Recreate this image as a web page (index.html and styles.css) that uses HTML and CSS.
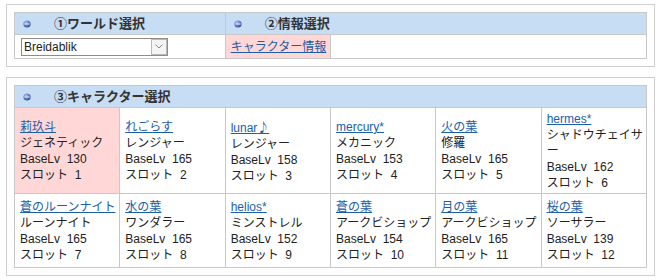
FILE: index.html
```html
<!DOCTYPE html>
<html lang="ja">
<head>
    <meta charset="UTF-8">
    <meta name="viewport" content="width=device-width, initial-scale=1.0">
    <title>キャラクター選択</title>
    <link rel="stylesheet" href="styles.css">
</head>
<body>
    <div class="box">
        <table class="grid">
            <colgroup><col><col><col><col><col><col></colgroup>
            <tr>
                <th colspan="2"><svg class="mark" width="8" height="8" viewBox="0 0 8 8"><defs><radialGradient id="dot" cx="35%" cy="30%" r="75%"><stop offset="0" stop-color="#a9bdee"/><stop offset="1" stop-color="#2b4a9f"/></radialGradient></defs><circle cx="4" cy="4" r="3.6" fill="url(#dot)"/><rect x="1.4" y="3.5" width="5.2" height="1" fill="#e4ebfb"/></svg>①ワールド選択</th>
                <th colspan="4"><svg class="mark" width="8" height="8" viewBox="0 0 8 8"><circle cx="4" cy="4" r="3.6" fill="url(#dot)"/><rect x="1.4" y="3.5" width="5.2" height="1" fill="#e4ebfb"/></svg>②情報選択</th>
            </tr>
            <tr class="tools">
                <td colspan="2">
                    <span class="selectwrap">
                        <select name="world"><option>Breidablik</option></select>
                        <span class="arrow"><svg width="8" height="5" viewBox="0 0 8 5"><polyline points="0.5,0.5 4,4 7.5,0.5" fill="none" stroke="#8a8a8a" stroke-width="1"/></svg></span>
                    </span>
                </td>
                <td class="on"><a href="#">キャラクター情報</a></td>
                <td colspan="3"></td>
            </tr>
        </table>
    </div>

    <div class="box">
        <table class="grid chars">
            <colgroup><col><col><col><col><col><col></colgroup>
            <tr>
                <th colspan="6"><svg class="mark" width="8" height="8" viewBox="0 0 8 8"><circle cx="4" cy="4" r="3.6" fill="url(#dot)"/><rect x="1.4" y="3.5" width="5.2" height="1" fill="#e4ebfb"/></svg>③キャラクター選択</th>
            </tr>
            <tr class="first">
                <td class="on"><a href="#">莉玖斗</a><br>ジェネティック<br>BaseLv&nbsp;&nbsp;130<br>スロット&nbsp;&nbsp;1</td>
                <td><a href="#">れごらす</a><br>レンジャー<br>BaseLv&nbsp;&nbsp;165<br>スロット&nbsp;&nbsp;2</td>
                <td><a href="#">lunar<span class="jp">♪</span></a><br>レンジャー<br>BaseLv&nbsp;&nbsp;158<br>スロット&nbsp;&nbsp;3</td>
                <td><a href="#">mercury*</a><br>メカニック<br>BaseLv&nbsp;&nbsp;153<br>スロット&nbsp;&nbsp;4</td>
                <td><a href="#">火の葉</a><br>修羅<br>BaseLv&nbsp;&nbsp;165<br>スロット&nbsp;&nbsp;5</td>
                <td><a href="#">hermes*</a><br>シャドウチェイサー<br>BaseLv&nbsp;&nbsp;162<br>スロット&nbsp;&nbsp;6</td>
            </tr>
            <tr class="second">
                <td><a href="#">蒼のルーンナイト</a><br>ルーンナイト<br>BaseLv&nbsp;&nbsp;165<br>スロット&nbsp;&nbsp;7</td>
                <td><a href="#">水の葉</a><br>ワンダラー<br>BaseLv&nbsp;&nbsp;165<br>スロット&nbsp;&nbsp;8</td>
                <td><a href="#">helios*</a><br>ミンストレル<br>BaseLv&nbsp;&nbsp;152<br>スロット&nbsp;&nbsp;9</td>
                <td><a href="#">蒼の葉</a><br>アークビショップ<br>BaseLv&nbsp;&nbsp;154<br>スロット&nbsp;&nbsp;10</td>
                <td><a href="#">月の葉</a><br>アークビショップ<br>BaseLv&nbsp;&nbsp;165<br>スロット&nbsp;&nbsp;11</td>
                <td><a href="#">桜の葉</a><br>ソーサラー<br>BaseLv&nbsp;&nbsp;139<br>スロット&nbsp;&nbsp;12</td>
            </tr>
        </table>
    </div>
</body>
</html>
```

FILE: styles.css
```css
body{
    margin: 4px 6px;
    font-family: "Liberation Sans", "Noto Sans CJK JP", sans-serif;
    font-size: 12px;
    line-height: 16px;
    color: #222;
    background-color: #fff;
}
.box{
    border: 1px solid #cfcfcf;
    padding: 7px;
    margin-bottom: 10px;
}
.grid{
    width: 100%;
    table-layout: fixed;
    border-collapse: collapse;
    border: 1px solid #c8c8c8;
}
.grid th{
    background-color: #c6ddf3;
    color: #333;
    font-size: 13px;
    font-weight: bold;
    text-align: left;
    padding: 3px 6px 2px;
    border: 1px solid #c8c8c8;
    white-space: nowrap;
}
.mark{
    vertical-align: 0;
    margin: 0 23px 0 2px;
}
.grid td{
    border: 1px solid #c8c8c8;
    padding: 2px 3px 2px 5px;
}
.grid td.on{
    background-color: #ffd7d7;
}
.grid a{
    color: #1b5ea9;
    white-space: nowrap;
}
.jp{
    font-family: "Noto Sans CJK JP", sans-serif;
}
.tools td{
    height: 19px;
}
.selectwrap{
    position: relative;
    display: inline-block;
    width: 147px;
    height: 18px;
    margin-left: 1px;
    vertical-align: middle;
}
.selectwrap select{
    appearance: none;
    width: 100%;
    height: 18px;
    border: 1px solid #8c8c8c;
    border-radius: 0;
    padding: 0 0 0 2px;
    background-color: #fff;
    font-family: "Liberation Sans", sans-serif;
    font-size: 12px;
    color: #222;
}
.arrow{
    position: absolute;
    right: 1px;
    top: 1px;
    width: 14px;
    height: 14px;
    border: 1px solid #b9b9b9;
    background-color: #f4f4f4;
    display: flex;
    align-items: center;
    justify-content: center;
}
.first td{
    padding-top: 3px;
    padding-bottom: 2px;
}
.second td{
    height: 69px;
}
```
